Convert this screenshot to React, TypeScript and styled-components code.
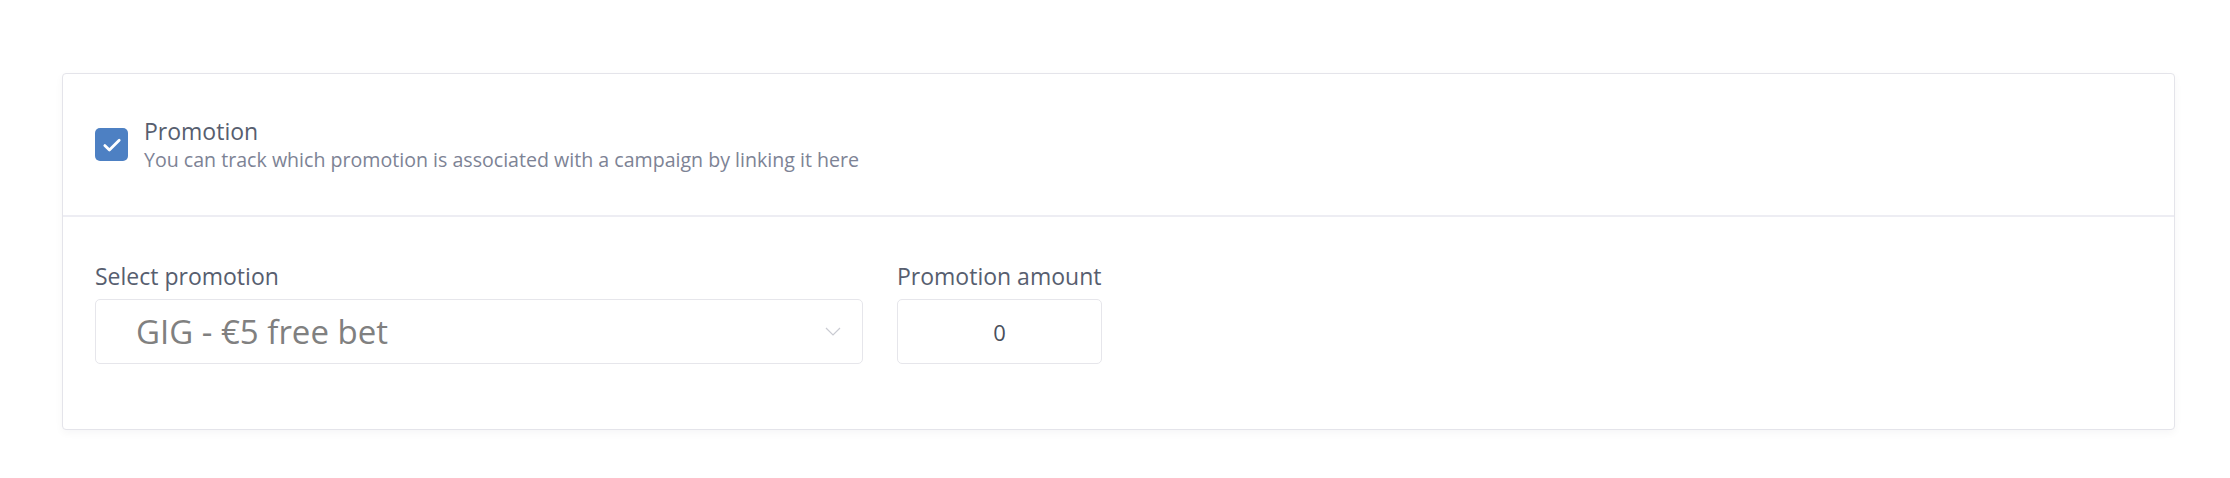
import React from 'react'
import styled, { createGlobalStyle } from 'styled-components'

const GlobalStyle = createGlobalStyle`
  body {
    margin: 0;
    background: #ffffff;
    font-family: 'Open Sans', 'Noto Sans', sans-serif;
  }
`

const Page = styled.div`
  padding: 73px 55px 40px 62px;
`

const Card = styled.div`
  background: #ffffff;
  border: 1px solid #e4e4ea;
  border-radius: 4px;
  box-shadow: 0 3px 8px rgba(30, 30, 60, 0.04);
`

const Header = styled.div`
  display: flex;
  align-items: center;
  gap: 16px;
  height: 143px;
  padding: 0 32px;
  border-bottom: 2px solid #ededf3;
  box-sizing: border-box;
`

const CheckBox = styled.span`
  display: flex;
  align-items: center;
  justify-content: center;
  flex: none;
  width: 33px;
  height: 33px;
  border-radius: 5px;
  background: #4d80c3;
`

const HeaderText = styled.div`
  display: flex;
  flex-direction: column;
`

const Title = styled.span`
  color: #575e6f;
  font-size: 23px;
  line-height: 30px;
`

const Subtitle = styled.span`
  color: #7d8395;
  font-size: 19.6px;
  line-height: 28px;
`

const Body = styled.div`
  display: flex;
  gap: 34px;
  padding: 44px 32px 65px;
`

const Field = styled.div<{ width: number }>`
  display: flex;
  flex-direction: column;
  gap: 8px;
  width: ${(p) => p.width}px;
`

const Label = styled.label`
  color: #575e6f;
  font-size: 23px;
  line-height: 30px;
  white-space: nowrap;
`

const SelectBox = styled.div`
  display: flex;
  align-items: center;
  justify-content: space-between;
  height: 65px;
  padding: 0 21px 0 40px;
  border: 1px solid #e6e6eb;
  border-radius: 5px;
  box-sizing: border-box;
  color: #808080;
  font-size: 33px;
`

const AmountBox = styled.div`
  display: flex;
  align-items: center;
  justify-content: center;
  height: 65px;
  border: 1px solid #e6e6eb;
  border-radius: 5px;
  box-sizing: border-box;
  color: #4a4f5c;
  font-size: 22px;
`

export default function App() {
  return (
    <>
      <GlobalStyle />
      <Page>
        <Card>
          <Header>
            <CheckBox>
              <svg width="20" height="16" viewBox="0 0 20 16" fill="none">
                <path d="M2.8 8.6l4.6 4.4L17.2 3.2" stroke="#fff" strokeWidth="2.8" strokeLinecap="round" strokeLinejoin="round" />
              </svg>
            </CheckBox>
            <HeaderText>
              <Title>Promotion</Title>
              <Subtitle>You can track which promotion is associated with a campaign by linking it here</Subtitle>
            </HeaderText>
          </Header>
          <Body>
            <Field width={768}>
              <Label>Select promotion</Label>
              <SelectBox>
                <span>GIG - €5 free bet</span>
                <svg width="16" height="9" viewBox="0 0 16 9" fill="none">
                  <path d="M1 1l7 7 7-7" stroke="#c9cbd2" strokeWidth="1.2" />
                </svg>
              </SelectBox>
            </Field>
            <Field width={205}>
              <Label>Promotion amount</Label>
              <AmountBox>0</AmountBox>
            </Field>
          </Body>
        </Card>
      </Page>
    </>
  )
}
